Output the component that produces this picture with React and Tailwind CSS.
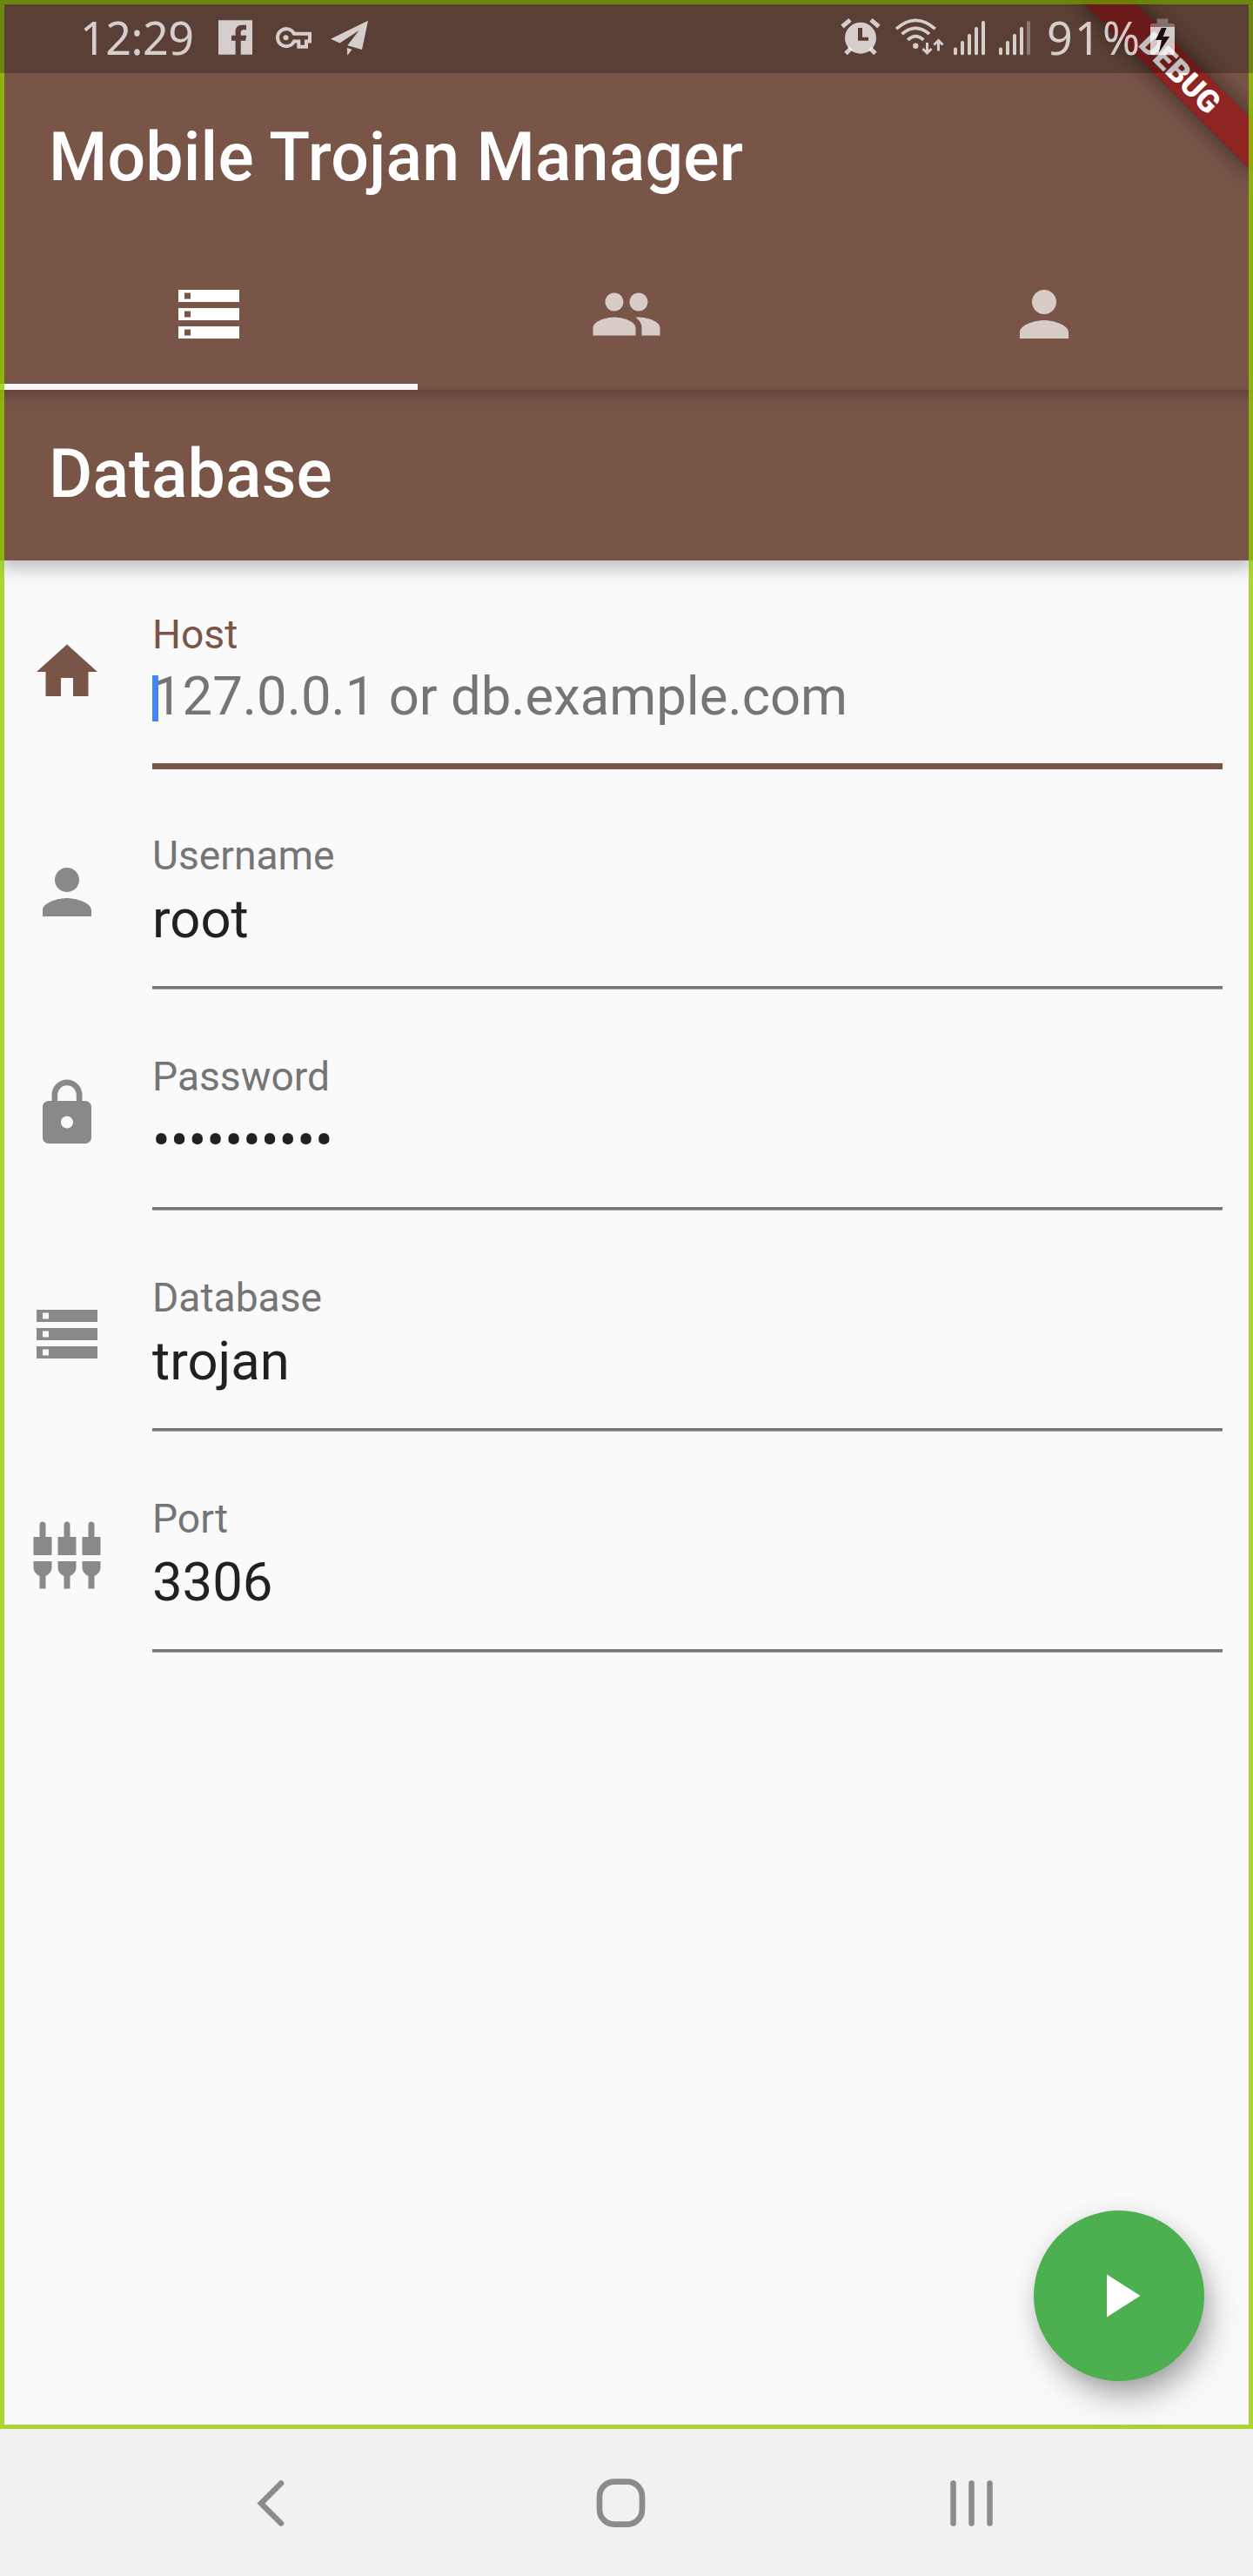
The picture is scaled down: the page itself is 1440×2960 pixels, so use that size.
import React from "react";
import {
  MdStorage,
  MdPeople,
  MdPerson,
  MdHome,
  MdLock,
  MdSettingsInputComponent,
  MdPlayArrow,
} from "react-icons/md";

function StatusBar() {
  return (
    <div className="relative z-20 flex h-[84px] items-center justify-between bg-black/25 pl-[92px] pr-[90px] font-['Noto_Sans',sans-serif] text-[52px] leading-[84px] text-white/75">
      <div className="flex items-center">
        <span className="w-[159px] pt-[2px] tracking-[-0.500px]">12:29</span>
        <svg className="h-[84px] w-[39px]" viewBox="251 0 39 84" fill="currentColor">
          <path d="M251 23.3h39v39.4h-13.3V46.7h5.5l1-6h-6.5v-3.5c0-2 1-3 3-3h3.3v-5.4h-5c-5 0-7.4 3-7.4 7.5v4.4H266v6h4.6v16H251z" />
        </svg>
        <svg className="ml-[27px] h-[84px] w-[41px]" viewBox="317 0 41 84" fill="none" stroke="currentColor" strokeWidth="4">
          <path d="M338 47.5a10 10 0 1 1 0-8.7h18v8.700h-4v6.300h-8.700v-6.300z" />
          <circle cx="328.500" cy="43.300" r="3" fill="currentColor" stroke="none" />
        </svg>
        <svg className="ml-[22px] h-[84px] w-[43px]" viewBox="380 0 43 84" fill="currentColor">
          <path d="M380 44.700 423 23.700 416 57l-16.700-4.700L412.500 35 390.500 49.500zM398.800 55l5.700 1.700-5.200 7z" />
        </svg>
      </div>
      <div className="flex items-center">
        <svg className="h-[84px] w-[46px]" viewBox="966 0 46 84">
          <g stroke="currentColor" strokeWidth="5" fill="none">
            <path d="M968 30.500l9-7.700M1001 22.800l9 7.700M972 61.500l6-6M1000 55.500l6 6" />
          </g>
          <path fill="currentColor" fillRule="evenodd" d="M989 25.700a18 18 0 1 1 0 36 18 18 0 1 1 0-36zM986 32v14.700h12v-4h-7V32z" />
        </svg>
        <svg className="ml-[16px] h-[84px] w-[57px]" viewBox="1028 0 57 84" fill="none" stroke="currentColor" strokeWidth="3.700">
          <path d="M1030 33.200Q1052.300 13.500 1074.700 33.200M1036.500 39.200Q1052.300 25.500 1068 39.200M1043.200 45.800Q1052.300 37.500 1061.400 45.800" />
          <circle cx="1052.300" cy="52.700" r="3.200" fill="currentColor" stroke="none" />
          <path strokeWidth="3" d="M1065.500 49v12M1060.500 56l5 5 5-5M1078.500 58.500V46.500M1073.500 51.500l5-5 5 5" />
        </svg>
        <SignalBars className="ml-[11px] h-[84px] w-[36px]" />
        <SignalBars className="ml-[16px] h-[84px] w-[36px]" weak />
        <span className="ml-[19px] w-[119px] pt-[2px] tracking-[2.200px]">91%</span>
        <svg className="h-[84px] w-[28px]" viewBox="1322 0 28 84" fill="currentColor">
          <path opacity="0.400" d="M1329.500 21.500h13v5.500h5q2.500 0 2.500 2.500v1.500h-28v-1.500q0-2.500 2.500-2.500h5z" />
          <path fillRule="evenodd" d="M1322 31h28v30q0 2.300-2.300 2.300h-23.400q-2.300 0-2.300-2.300zM1335 32l-7 14h7l-3 14 12-18h-7.500l4-10z" />
          <path fill="#1d0f10" d="M1335 32h5.500l-4 10h7.500l-12 18 3-14h-7z" />
        </svg>
      </div>
    </div>
  );
}

function SignalBars({ className, weak }) {
  const tops = [54.5, 47, 39, 31, 24];
  return (
    <svg className={className} viewBox="0 0 36 84" fill="currentColor">
      {tops.map((y, i) => (
        <rect key={y} x={i * 8} y={y} width="4" height={63.3 - y} rx="1.8" opacity={weak && i === 4 ? 0.4 : 1} />
      ))}
    </svg>
  );
}

function Tab({ icon: Icon, active }) {
  return (
    <div className="flex h-[168px] flex-1 flex-col">
      <div className={active ? "flex h-[161px] items-center justify-center text-white" : "flex h-[161px] items-center justify-center text-white/70"}>
        <Icon className="size-[84px]" />
      </div>
      {active && <div className="h-[7px] bg-white" />}
    </div>
  );
}

function Field({ icon: Icon, label, value, hint, focused }) {
  return (
    <div className="flex h-[254px] pl-[35px] pr-[35px]">
      <Icon className={focused ? "mt-[28.500px] size-[84px] text-[#795548]" : "mt-[28px] size-[84px] text-[#898989]"} />
      <div className="ml-[56px] flex h-[183px] flex-1 flex-col">
        <div className={focused ? "text-[46.200px] leading-[56px] text-[#795548]" : "text-[46.200px] leading-[56px] text-[#757575]"}>
          {label}
        </div>
        {focused ? (
          <div className="relative mt-[7px] text-[61.600px] leading-[72px] text-[#757575]">
            {hint}
            <span className="absolute left-0 top-[12px] h-[53px] w-[7px] bg-[#4285f4]" />
          </div>
        ) : (
          <div className="mt-[9px] text-[61.600px] leading-[72px] text-[#212121]">{value}</div>
        )}
        {focused ? (
          <div className="mt-[41px] h-[7px] shrink-0 bg-[#795548]" />
        ) : (
          <div className="mt-[41px] h-[4px] shrink-0 border-b border-[#a5a5a5] bg-[#757575]" />
        )}
      </div>
    </div>
  );
}

function DebugBanner() {
  return (
    <div className="absolute left-full top-0 z-10 h-0 w-0 origin-top-left rotate-45">
      <div className="absolute left-[-140px] top-[98px] flex h-[42px] w-[280px] items-center justify-center bg-black/40 shadow-[0_0_28px_rgba(0,0,0,0.500)]">
        <div className="absolute inset-0 bg-[#b71c1ca0]" />
        <span className="relative text-[35.700px] font-black leading-[42px] text-white">DEBUG</span>
      </div>
    </div>
  );
}

export default function App() {
  return (
    <div className="flex h-[2960px] w-[1440px] flex-col overflow-hidden bg-[#f1f1f1] font-[Roboto,sans-serif]">
      <div className="relative flex h-[2791px] flex-col overflow-hidden bg-[#fafafa]">
        <header className="bg-[#795548]">
          <StatusBar />
          <h1 className="h-[196px] pl-[56px] text-[77px] font-medium leading-[194px] tracking-[0.170px] text-white">Mobile Trojan Manager</h1>
          <div className="flex">
            <Tab icon={MdStorage} active />
            <Tab icon={MdPeople} />
            <Tab icon={MdPerson} />
          </div>
        </header>
        <div className="h-[196px] bg-[#795548] pl-[56px] shadow-[0_8px_20px_rgba(0,0,0,0.260),inset_0_16px_18px_-12px_rgba(0,0,0,0.260)]">
          <h2 className="text-[77px] font-medium leading-[194px] tracking-[0.170px] text-white">Database</h2>
        </div>
        <div className="flex flex-col pt-[57px]">
          <Field icon={MdHome} label="Host" hint="127.0.0.1 or db.example.com" focused />
          <Field icon={MdPerson} label="Username" value="root" />
          <Field icon={MdLock} label="Password" value="••••••••••" />
          <Field icon={MdStorage} label="Database" value="trojan" />
          <Field icon={MdSettingsInputComponent} label="Port" value="3306" />
        </div>
        <button className="absolute bottom-[55px] right-[56px] flex size-[196px] items-center justify-center rounded-full bg-[#4caf50] text-white shadow-[8px_20px_36px_-4px_rgba(0,0,0,0.340),0_2px_24px_rgba(0,0,0,0.080)]">
          <MdPlayArrow className="size-[84px]" />
        </button>
        <DebugBanner />
        <div className="pointer-events-none absolute inset-0 z-10 border-[5px] border-[#95ca00cc]" />
      </div>
      <nav className="flex h-[169px] items-center text-[#8b8b8b]">
        <svg className="ml-[290px] size-[60px]" viewBox="290 2845 60 60" fill="none" stroke="currentColor" strokeWidth="6.500" strokeLinecap="round">
          <path d="M323 2852.500 300 2875.500 323 2898.500" />
        </svg>
        <svg className="ml-[333px] size-[60px]" viewBox="683 2845 60 60" fill="none" stroke="currentColor" strokeWidth="6.700">
          <rect x="689" y="2850.700" width="49" height="49" rx="17" />
        </svg>
        <svg className="ml-[343px] size-[60px]" viewBox="1086 2845 60 60" fill="none" stroke="currentColor" strokeWidth="6.500" strokeLinecap="round">
          <path d="M1095.500 2852.500v46M1116.500 2852.500v46M1137.500 2852.500v46" />
        </svg>
      </nav>
    </div>
  );
}
